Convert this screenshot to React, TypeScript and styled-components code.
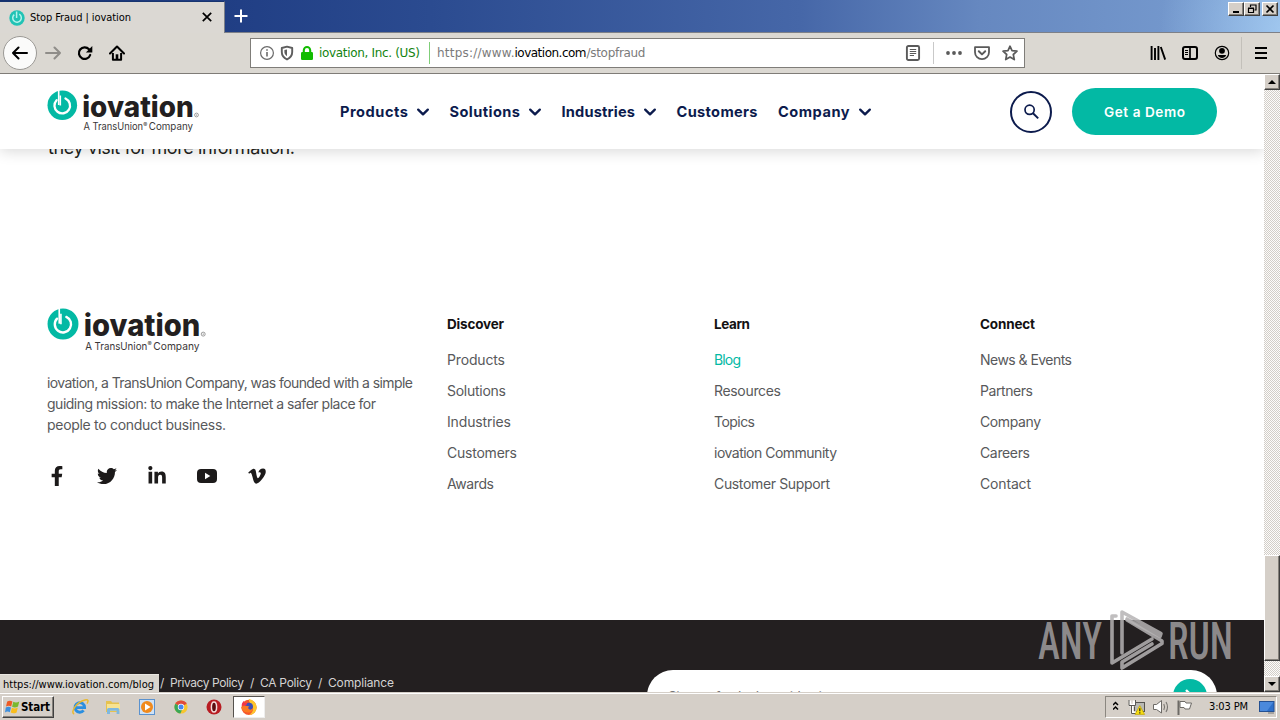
import * as React from "react";
import { useLayoutEffect, useRef, useState } from "react";
import styled, { createGlobalStyle, css } from "styled-components";
import { FaFacebookF, FaTwitter, FaLinkedinIn, FaVimeoV } from "react-icons/fa";

const Teal = "#03b9a4";
const Navy = "#0c1b4d";
const Face = "#d5cfc8";
const SystemFont = `"DejaVu Sans Condensed", "DejaVu Sans", sans-serif`;
const SiteFont = `Inter, "Liberation Sans", sans-serif`;

const GlobalStyle = createGlobalStyle`
    html, body{
        margin: 0;
        padding: 0;
        overflow: hidden;
    }
    *{
        box-sizing: border-box;
    }
    svg{
        display: block;
        flex: none;
    }
`;

const raised = css`
    background: ${Face};
    border: 1px solid;
    border-color: #fff #404040 #404040 #fff;
    box-shadow: inset -1px -1px 0 #85817b;
`;

/* spreads the letters of a label over a given width */
const FitText = styled.span`
    display: inline-block;
    flex: none;
    white-space: pre;
`;

const Fit:(props:{width:number,children:string,className?:string})=>React.ReactElement = ({width,children,className}) =>{
    const ref = useRef<HTMLSpanElement>(null);
    const [spacing,setSpacing] = useState<number>(0);
    useLayoutEffect(()=>{
        const el = ref.current;
        if(!el) return;
        el.style.letterSpacing = "0px";
        const natural = el.getBoundingClientRect().width;
        setSpacing((width - natural) / Math.max(children.length - 1,1));
    },[width,children]);
    return(
        <FitText ref={ref} className={className} style={{letterSpacing:`${spacing}px`,marginRight:`${-spacing}px`}}>{children}</FitText>
    )
}

const Screen = styled.div`
    display: flex;
    flex-direction: column;
    width: 1280px;
    height: 720px;
    overflow: hidden;
    background: #fff;
    font-family: ${SystemFont};
    font-stretch: condensed;
`;

/* ---------- browser chrome ---------- */

const TitleBar = styled.div`
    display: flex;
    align-items: flex-start;
    height: 33px;
    flex: none;
    border-bottom: 1px solid #7d8088;
    background: radial-gradient(circle at 1290px 30px, rgba(175,215,250,.75) 0, rgba(160,200,240,0) 130px), linear-gradient(90deg, #15306f 0, #213f85 240px, #2b4b90 430px, #4667a8 800px, #6688c0 980px, #7ba0d3 1280px);
`;

const Tab = styled.div`
    display: flex;
    align-items: center;
    width: 225px;
    height: 32px;
    margin-top: 1px;
    padding: 0 11px 0 9px;
    border-top: 1px solid #17346f;
    border-right: 1px solid #7d8088;
    background: #dbd8d3;
    font-size: 11px;
    color: #000;
`;

const TabTitle = styled.div`
    flex: 1;
    padding-left: 5px;
    line-height: 16px;
`;

const NewTab = styled.div`
    padding: 9px 0 0 9px;
`;

const WindowButtons = styled.div`
    display: flex;
    margin-left: auto;
    padding: 2px 2px 0 0;
`;

const WindowButton = styled.div<{$gap?:boolean}>`
    ${raised}
    width: 16px;
    height: 14px;
    margin-left: ${props=>props.$gap ? "2px" : "0"};
`;

const ToolBar = styled.div`
    display: flex;
    align-items: center;
    height: 41px;
    flex: none;
    padding: 0 13px 0 3px;
    border-bottom: 1px solid #7f7c77;
    background: #dbd8d2;
`;

const BackButton = styled.div`
    display: grid;
    place-items: center;
    width: 34px;
    height: 34px;
    border: 1px solid #9b9995;
    border-radius: 50%;
    background: #fbfbfa;
`;

const NavIcons = styled.div`
    display: flex;
    gap: 16px;
    padding-left: 8px;
    width: 213px;
`;

const UrlField = styled.div`
    display: flex;
    align-items: center;
    width: 775px;
    height: 30px;
    border: 1px solid #7f7d79;
    background: #fff;
    font-family: "DejaVu Sans", sans-serif;
    font-stretch: normal;
    font-size: 12px;
    padding: 0 6px 0 8px;
`;

const UrlIcons = styled.div<{$gap:number}>`
    display: flex;
    align-items: center;
    gap: ${props=>props.$gap}px;
`;

const SiteOwner = styled(Fit)`
    color: #12830f;
    margin-left: 4px;
`;

const Divider = styled.div<{$color:string,$height:number,$left:number,$right:number}>`
    width: 1px;
    height: ${props=>props.$height}px;
    margin: 0 ${props=>props.$right}px 0 ${props=>props.$left}px;
    background: ${props=>props.$color};
    flex: none;
`;

const UrlText = styled.div`
    display: flex;
    flex: 1;
    color: #7b7b7b;
`;

const Host = styled(Fit)`
    color: #000;
`;

const ToolIcons = styled.div`
    display: flex;
    align-items: center;
    gap: 16px;
    margin-left: auto;
`;

/* ---------- page ---------- */

const Viewport = styled.div`
    display: flex;
    flex: none;
    height: 618px;
    position: relative;
`;

const Page = styled.div`
    display: flex;
    flex-direction: column;
    width: 1264px;
    height: 618px;
    overflow: hidden;
    font-family: ${SiteFont};
    font-stretch: normal;
    color: #231f20;
`;

const Header = styled.header`
    display: flex;
    align-items: center;
    height: 75px;
    flex: none;
    padding: 0 47px 0 47px;
    background: #fff;
    box-shadow: 0 2px 14px rgba(0,0,0,.16);
    z-index: 1;
`;

const Menu = styled.nav`
    display: flex;
    align-items: center;
    gap: 20.5px;
    margin-left: 139px;
    color: ${Navy};
    font-size: 14.6px;
    font-weight: 700;
    line-height: 20px;
`;

const MenuItem = styled.div`
    display: flex;
    align-items: center;
    gap: 9px;
`;

const SearchButton = styled.div`
    display: grid;
    place-items: center;
    width: 42px;
    height: 42px;
    margin-left: auto;
    border: 2px solid ${Navy};
    border-radius: 50%;
`;

const DemoButton = styled.div`
    display: grid;
    place-items: center;
    width: 145px;
    height: 47px;
    margin-left: 20px;
    border-radius: 24px;
    background: ${Teal};
    color: #fff;
    font-size: 13.6px;
    font-weight: 600;
`;

const LastLine = styled.p`
    height: 159px;
    flex: none;
    margin: 0;
    padding-left: 48px;
    font-size: 18px;
    line-height: 24px;
    margin-top: -13px;
    color: #231f20;
`;

const FooterGrid = styled.footer`
    display: grid;
    grid-template-columns: 400px 267px 266px 1fr;
    flex: none;
    height: 325px;
    padding: 13px 0 0 47px;
`;

const About = styled.div`
    font-size: 14px;
    line-height: 21px;
    color: #58595b;
`;

const AboutText = styled.div`
    display: flex;
    flex-direction: column;
    align-items: flex-start;
    padding-top: 19px;
`;

const Social = styled.div`
    display: flex;
    gap: 30px;
    padding-top: 31px;
    color: #1c1a1a;
`;

const SocialIcon = styled.div`
    display: grid;
    place-items: center;
    width: 20px;
    height: 20px;
`;

const Column = styled.div`
    display: flex;
    flex-direction: column;
    align-items: flex-start;
    padding-top: 6px;
    font-size: 14px;
`;

const ColumnTitle = styled.div`
    height: 36px;
    font-weight: 700;
    font-size: 13.5px;
    line-height: 20px;
    color: #131112;
`;

const ColumnLink = styled.div<{$active?:boolean}>`
    height: 31px;
    line-height: 20px;
    color: ${props=>props.$active ? Teal : "#58595b"};
`;

const Bottom = styled.div`
    display: flex;
    justify-content: space-between;
    flex: none;
    height: 72px;
    padding-right: 47px;
    background: #231f20;
    color: #d4d3d3;
    font-size: 12px;
`;

const Legal = styled.div`
    display: flex;
    padding: 54px 0 0 160px;
    line-height: 17px;
`;

const LegalLink = styled.div<{$width:number}>`
    width: ${props=>props.$width}px;
`;

const Slash = styled.span`
    width: 10px;
    flex: none;
`;

const Subscribe = styled.div`
    display: flex;
    justify-content: space-between;
    width: 570px;
    height: 52px;
    margin-top: 50px;
    margin-bottom: -30px;
    padding: 9px 10px 0 21px;
    border-radius: 26px;
    background: #fff;
    color: #777;
    font-size: 14px;
    line-height: 36px;
`;

const SubscribeButton = styled.div`
    width: 34px;
    height: 34px;
    border-radius: 50%;
    background: ${Teal};
    display: grid;
    place-items: center;
`;

const ScrollBar = styled.div`
    display: flex;
    flex-direction: column;
    width: 16px;
    height: 618px;
    background: repeating-conic-gradient(#fdfcfb 0 25%, #d2cec8 0 50%) 0 0 / 2px 2px;
`;

const ScrollButton = styled.div`
    ${raised}
    display: grid;
    place-items: center;
    height: 16px;
    flex: none;
`;

const ScrollThumb = styled.div`
    ${raised}
    height: 106px;
    margin: auto 0 15px;
`;

const StatusBubble = styled.div`
    position: absolute;
    left: 0;
    bottom: 0;
    width: 159px;
    height: 18px;
    padding-left: 3px;
    background: #d9d5ce;
    border-top: 1px solid #e9e6e1;
    font-size: 11px;
    line-height: 19px;
    color: #000;
`;

const Watermark = styled.svg`
    position: absolute;
    left: 1030px;
    top: 526px;
    z-index: 2;
`;

/* ---------- taskbar ---------- */

const TaskBar = styled.div`
    display: flex;
    align-items: flex-start;
    height: 28px;
    flex: none;
    padding: 3px 3px 0 2px;
    background: ${Face};
    border-top: 1px solid ${Face};
    box-shadow: inset 0 1px 0 #fff;
    font-size: 11px;
    color: #000;
`;

const StartButton = styled.div`
    ${raised}
    display: flex;
    align-items: center;
    width: 52px;
    height: 22px;
    padding-left: 2px;
    gap: 1px;
    font-weight: 700;
    font-size: 11.5px;
`;

const QuickLaunch = styled.div`
    display: flex;
    padding-left: 9px;
`;

const Launcher = styled.div<{$active?:boolean}>`
    display: grid;
    place-items: center;
    width: ${props=>props.$active ? "32px" : "33.6px"};
    height: 22px;
    margin-left: ${props=>props.$active ? "2px" : "0"};
    ${props=>props.$active && css`
        background: #fff;
        border: 1px solid;
        border-color: #55524e #eee #eee #55524e;
    `}
`;

const Tray = styled.div`
    display: flex;
    align-items: center;
    width: 172px;
    height: 22px;
    margin-left: auto;
    padding-left: 7px;
    border: 1px solid;
    border-color: #8b8780 #fff #fff #8b8780;
`;

const Clock = styled.div`
    width: 50px;
    margin-left: 14px;
    line-height: 16px;
`;

/* ---------- drawings ---------- */

const Logo:(props:{scale:number})=>React.ReactElement = ({scale}) =>(
    <svg width={154 * scale} height={43 * scale} viewBox="0 0 154 43">
        <circle cx="15.3" cy="15.3" r="14.8" fill={Teal}/>
        <path d="M11.7 0 V15" stroke="#fff" strokeWidth="1.6"/>
        <path d="M13.3 5.5 V15.5" stroke="#fff" strokeWidth="1.6"/>
        <path d="M18.5 8.5 A7.8 7.8 0 1 1 9.6 10.2" fill="none" stroke="#fff" strokeWidth="2.3" strokeLinecap="round"/>
        <text x="35.2" y="26.6" fontFamily="Inter" fontWeight="800" fontSize="28.5" textLength="111.5" lengthAdjust="spacingAndGlyphs" fill="#231f20">iovation</text>
        <circle cx="149.5" cy="25" r="1.9" fill="none" stroke="#777" strokeWidth=".7"/>
        <circle cx="149.5" cy="25" r=".6" fill="#777"/>
        <text x="36.5" y="40.3" fontFamily="Inter" fontSize="10.4" textLength="59.5" lengthAdjust="spacingAndGlyphs" fill="#3a3738">A TransUnion</text>
        <text x="96.2" y="36.5" fontFamily="Inter" fontSize="6" fill="#3a3738">®</text>
        <text x="101.8" y="40.3" fontFamily="Inter" fontSize="10.4" textLength="44.2" lengthAdjust="spacingAndGlyphs" fill="#3a3738">Company</text>
    </svg>
)

const Favicon = () =>(
    <svg width="16" height="16" viewBox="0 0 16 16">
        <circle cx="8" cy="8" r="7.7" fill="#21c3b5"/>
        <path d="M10.3 4.2 A4.3 4.3 0 1 1 5.2 4.6 M7.6 1.5 V8" fill="none" stroke="#b5f3ec" strokeWidth="1.5"/>
    </svg>
)

const Chevron = () =>(
    <svg width="12" height="8" viewBox="0 0 12 8">
        <path d="M1.2 1.6 L6 6.4 L10.8 1.6" fill="none" stroke={Navy} strokeWidth="2.3" strokeLinecap="round" strokeLinejoin="round"/>
    </svg>
)

const Arrow = ({flip,color}:{flip?:boolean,color:string}) =>(
    <svg width="16" height="16" viewBox="0 0 16 16">
        <path d={flip ? "M1 8 H15 M9.5 2.5 L15 8 L9.5 13.5" : "M15 8 H1 M6.5 2.5 L1 8 L6.5 13.5"} fill="none" stroke={color} strokeWidth="2" strokeLinecap="round" strokeLinejoin="round"/>
    </svg>
)

const Reload = () =>(
    <svg width="16" height="16" viewBox="0 0 16 16">
        <path d="M13.2 10 A5.8 5.8 0 1 1 12 4.2" fill="none" stroke="#000" strokeWidth="2.2" strokeLinecap="round"/>
        <path d="M15.3 1 V7.4 H8.9 Z" fill="#000"/>
    </svg>
)

const Home = () =>(
    <svg width="16" height="16" viewBox="0 0 16 16">
        <path d="M1 8.4 L8 1.5 L15 8.4" fill="none" stroke="#000" strokeWidth="2.1" strokeLinecap="round" strokeLinejoin="round"/>
        <path d="M3.9 8 V14.7 H12.1 V8" fill="none" stroke="#000" strokeWidth="2" strokeLinejoin="round"/>
        <path d="M6.7 14 V9.3 H9.3 V14 Z" fill="#000"/>
    </svg>
)

const Info = () =>(
    <svg width="16" height="16" viewBox="0 0 16 16">
        <circle cx="8" cy="8" r="6.4" fill="none" stroke="#6b6b6b" strokeWidth="1.2"/>
        <path d="M8 7 V11.6 M8 4.2 V5.8" stroke="#6b6b6b" strokeWidth="1.6"/>
    </svg>
)

const Shield = () =>(
    <svg width="16" height="16" viewBox="0 0 16 16">
        <path d="M8 1.6 L13.2 3 V7 C13.2 10.5 11 13 8 14.5 C5 13 2.8 10.5 2.8 7 V3 Z" fill="none" stroke="#5e5e5e" strokeWidth="1.9" strokeLinejoin="round"/>
        <path d="M8 4.4 V11.2 C6.3 10 5.4 8.7 5.4 7 V5 Z" fill="#5e5e5e"/>
    </svg>
)

const Lock = () =>(
    <svg width="16" height="16" viewBox="0 0 16 16">
        <path d="M4.8 8 V5.2 A3.2 3.2 0 0 1 11.2 5.2 V8" fill="none" stroke="#12bc00" strokeWidth="2.1"/>
        <rect x="2" y="7" width="12" height="8" rx="1.2" fill="#12bc00"/>
    </svg>
)

const Reader = () =>(
    <svg width="16" height="16" viewBox="0 0 16 16" fill="none" stroke="#5a5a5a">
        <rect x="1.9" y="1" width="12.2" height="14" rx="1.5" strokeWidth="1.9"/>
        <path d="M4.8 4.5 H11.2 M4.8 6.5 H11.2 M4.8 8.5 H11.2 M4.8 10.5 H9" strokeWidth="1"/>
    </svg>
)

const Dots = () =>(
    <svg width="16" height="16" viewBox="0 0 16 16" fill="#5a5a5a">
        <circle cx="2" cy="8" r="1.9"/>
        <circle cx="8" cy="8" r="1.9"/>
        <circle cx="14" cy="8" r="1.9"/>
    </svg>
)

const Pocket = () =>(
    <svg width="16" height="16" viewBox="0 0 16 16" fill="none" stroke="#5a5a5a" strokeLinecap="round" strokeLinejoin="round">
        <path d="M1 2.2 H15 V7.2 A7 7 0 0 1 1 7.2 Z" strokeWidth="1.8"/>
        <path d="M4.8 6.3 L8 9.4 L11.2 6.3" strokeWidth="2"/>
    </svg>
)

const Star = () =>(
    <svg width="16" height="16" viewBox="0 0 16 16">
        <path d="M8 1.2 L10 5.7 L15 6.2 L11.3 9.5 L12.3 14.6 L8 12 L3.7 14.6 L4.7 9.5 L1 6.2 L6 5.7 Z" fill="none" stroke="#5a5a5a" strokeWidth="1.7" strokeLinejoin="round"/>
    </svg>
)

const Library = () =>(
    <svg width="16" height="16" viewBox="0 0 16 16">
        <path d="M1.6 1 V15 M5 3 V15 M8.4 1 V15 M10.8 2 L15.2 14.6" fill="none" stroke="#000" strokeWidth="1.9"/>
    </svg>
)

const Sidebar = () =>(
    <svg width="16" height="16" viewBox="0 0 16 16" fill="none" stroke="#000">
        <rect x="1" y="2" width="14" height="12" rx="2" strokeWidth="2"/>
        <path d="M8 2 V14" strokeWidth="1.7"/>
        <path d="M3 5.5 H6 M3 7.5 H6 M3 9.5 H6" strokeWidth="1"/>
    </svg>
)

const Account = () =>(
    <svg width="16" height="16" viewBox="0 0 16 16">
        <circle cx="8" cy="8" r="6.7" fill="none" stroke="#000" strokeWidth="1.2"/>
        <circle cx="8" cy="5.8" r="2.9"/>
        <path d="M3.8 10 H12.2 C11.3 12.2 9.8 13 8 13 C6.2 13 4.7 12.2 3.8 10 Z"/>
    </svg>
)

const Burger = () =>(
    <svg width="12" height="16" viewBox="0 0 12 16">
        <path d="M.5 3 H11.5 M.5 8 H11.5 M.5 13 H11.5" stroke="#000" strokeWidth="2" strokeLinecap="round"/>
    </svg>
)

const Glass = () =>(
    <svg width="18" height="18" viewBox="0 0 18 18">
        <circle cx="7.6" cy="6.8" r="4.6" fill="none" stroke={Navy} strokeWidth="1.7"/>
        <path d="M11 10.2 L16.2 15.4" stroke={Navy} strokeWidth="2"/>
    </svg>
)

const YouTube = () =>(
    <svg width="20" height="16" viewBox="0 0 20 16">
        <rect x="0" y="1" width="20" height="14" rx="4" fill="#1c1a1a"/>
        <path d="M8 4.8 V11.2 L13.3 8 Z" fill="#fff"/>
    </svg>
)

const WindowsFlag = () =>(
    <svg width="15" height="16" viewBox="0 0 15 16">
        <path d="M2.2 2.6 Q4.8 .8 7.4 2.4 L6.2 7.4 Q3.6 6 1 7.6 Z" fill="#ee5a24"/>
        <path d="M8.3 2.8 Q11 4.4 14.3 2.6 L13 7.6 Q10 9.4 7.1 7.8 Z" fill="#7ab82e"/>
        <path d="M.8 8.5 Q3.4 7 6 8.4 L4.8 13.2 Q2.4 11.8 0 13.4 Z" fill="#3e8fdd"/>
        <path d="M6.9 8.8 Q9.8 10.4 12.8 8.6 L11.6 13.4 Q8.6 15.2 5.7 13.6 Z" fill="#f9bd1c"/>
    </svg>
)

const Explorer = () =>(
    <svg width="18" height="18" viewBox="0 0 18 18">
        <path d="M4.7 9.6 H13.6 A4.8 4.8 0 1 0 12.6 12.4" fill="none" stroke="#2b8fe0" strokeWidth="2.9"/>
        <path d="M3.2 16 C-1 15 5 4 14 2 C17.5 1.2 17.6 3 16 5.6" fill="none" stroke="#e9b92e" strokeWidth="1.5"/>
    </svg>
)

const Folder = () =>(
    <svg width="18" height="18" viewBox="0 0 18 18">
        <path d="M2 3 H7 L8.3 4.6 H15 V14 H2 Z" fill="#e6c250"/>
        <rect x="3" y="6" width="13" height="7" fill="#f8e391"/>
        <path d="M3 16 V11.5 Q3 10 4.5 10 H13.8 Q15.4 10 15.4 11.5 V16 H12.6 V12.8 H6 V16 Z" fill="#7fb8df"/>
    </svg>
)

const Player = () =>(
    <svg width="18" height="18" viewBox="0 0 18 18">
        <rect x="1.5" y="1.5" width="15" height="15" fill="#cfe2f6" stroke="#5a92cf"/>
        <circle cx="9" cy="9" r="6" fill="#f08a1d"/>
        <path d="M7 5.5 V12.5 L12.6 9 Z" fill="#fff"/>
    </svg>
)

const Chrome = () =>(
    <svg width="16" height="16" viewBox="0 0 16 16">
        <circle cx="8" cy="8" r="6.6" fill="#f7c62f"/>
        <path d="M8 8 L2.3 4.7 A6.6 6.6 0 0 1 13.7 4.7 Z" fill="#df4a3c"/>
        <path d="M8 8 L2.3 4.7 A6.6 6.6 0 0 0 7.4 14.6 L9.6 9.5 Z" fill="#3aa757"/>
        <circle cx="8" cy="8" r="3.2" fill="#fff"/>
        <circle cx="8" cy="8" r="2.5" fill="#4687f0"/>
    </svg>
)

const Opera = () =>(
    <svg width="16" height="16" viewBox="0 0 16 16">
        <circle cx="8" cy="8" r="7.5" fill="#b81c22"/>
        <ellipse cx="8" cy="8" rx="2.6" ry="5" fill="#5c0c0e" stroke="#f3dcdc" strokeWidth="1.5"/>
    </svg>
)

const Firefox = () =>(
    <svg width="18" height="18" viewBox="0 0 18 18">
        <circle cx="9" cy="9.4" r="7.6" fill="#f6562b"/>
        <path d="M9 1 C14 2 17 6 16.6 10 A7.7 7.7 0 0 1 9 17 C13 14 14 11 12.4 8 C11.4 5.5 8.4 4.5 9 1 Z" fill="#fdc52c"/>
        <circle cx="9" cy="8.8" r="4" fill="#3d4fb8"/>
        <path d="M1.4 9.4 C3 7.5 6 7.2 9.6 8.6 C8 9 7.6 10.6 9.6 11.6 C12 12 12.6 10.6 13 9.6 C13.4 13 11 14.6 8.6 14.6 C5 14.6 2 12.6 1.4 9.4 Z" fill="#fb7a22"/>
        <path d="M1.6 7.4 C2 5 3 3.6 4 3 L4.4 5 L7.4 5 L6 7.4 Z" fill="#f2344b"/>
    </svg>
)

const TrayIcons = () =>(
    <svg width="82" height="18" viewBox="0 0 82 18">
        <path d="M0 7 L2.5 4.5 L5 7 M0 11.5 L2.5 9 L5 11.5" fill="none" stroke="#000" strokeWidth="1.5"/>
        <rect x="21.5" y="4.5" width="10" height="9" fill="#b9b9b4" stroke="#55534f"/>
        <path d="M17 2.5 V7 H21 V2.5 M19 7 V14.5 H23" fill="none" stroke="#fff" strokeWidth="2.6"/>
        <path d="M16 2 V7.5 H22.5 V2 M18.5 7.5 V15.5 H23" fill="none" stroke="#5a5855" strokeWidth="1"/>
        <path d="M26.8 7.6 L31.6 16.4 H22 Z" fill="#f7dd13" stroke="#bfa200" strokeWidth=".7"/>
        <path d="M26.8 10.3 V13.3 M26.8 14.2 V15.4" stroke="#222" strokeWidth="1.2"/>
        <path d="M40.5 6.5 H43.5 L48.5 2.5 V15 L43.5 11.5 H40.5 Z" fill="#fff" stroke="#6d6a66"/>
        <path d="M50.8 6 Q52.4 9 50.8 12 M53 4 Q56 9 53 14" fill="none" stroke="#77746f" strokeWidth="1.1"/>
        <path d="M65.5 2.5 V17" stroke="#6d6a66" strokeWidth="2"/>
        <path d="M67 3.5 H72 L73 5 H78.5 L76.5 11 H72 L71 9.5 H67 Z" fill="#fff" stroke="#6d6a66"/>
    </svg>
)

const Desktop = () =>(
    <svg width="16" height="16" viewBox="0 0 16 16">
        <rect x=".5" y="2.5" width="14.5" height="10" fill="#2d6fca" stroke="#245092"/>
        <path d="M1 3 H14.5 L8 12 H1 Z" fill="#5e9be8" opacity=".6"/>
        <path d="M9 14 H15" stroke="#777" strokeWidth="1"/>
    </svg>
)

/* ---------- content ---------- */

const menu:{name:string,width:number,drop:boolean}[] = [
    {name:"Products",width:68,drop:true},
    {name:"Solutions",width:70.5,drop:true},
    {name:"Industries",width:73.5,drop:true},
    {name:"Customers",width:81,drop:false},
    {name:"Company",width:71.5,drop:true},
];

const columns:{title:string,width:number,links:[string,number][]}[] = [
    {title:"Discover",width:57,links:[["Products",58],["Solutions",59],["Industries",64],["Customers",70],["Awards",47]]},
    {title:"Learn",width:36,links:[["Blog",27],["Resources",67],["Topics",41],["iovation Community",123],["Customer Support",116]]},
    {title:"Connect",width:55,links:[["News & Events",92],["Partners",53],["Company",61],["Careers",50],["Contact",51]]},
];

const App:()=>React.ReactElement = () =>{
    return(
        <Screen>
            <GlobalStyle/>
            <TitleBar>
                <Tab>
                    <Favicon/>
                    <TabTitle><Fit width={101}>Stop Fraud | iovation</Fit></TabTitle>
                    <svg width="12" height="12" viewBox="0 0 12 12">
                        <path d="M1.8 .8 L10.2 9.2 M10.2 .8 L1.8 9.2" stroke="#000" strokeWidth="1.7"/>
                    </svg>
                </Tab>
                <NewTab>
                    <svg width="14" height="14" viewBox="0 0 14 14">
                        <path d="M7 .5 V13.5 M.5 7 H13.5" stroke="#fff" strokeWidth="2"/>
                    </svg>
                </NewTab>
                <WindowButtons>
                    <WindowButton>
                        <svg width="13" height="12" viewBox="0 0 13 12"><path d="M4 9 H10" stroke="#000" strokeWidth="2"/></svg>
                    </WindowButton>
                    <WindowButton>
                        <svg width="13" height="12" viewBox="0 0 13 12" fill="none" stroke="#000">
                            <path d="M5.5 4 V2 H11 V7 H9.5 M5 2 H11.5" strokeWidth="1.2"/>
                            <path d="M3.5 5.5 H8.5 V9.5 H3.5 Z M3 5 H9" strokeWidth="1.2"/>
                        </svg>
                    </WindowButton>
                    <WindowButton $gap>
                        <svg width="13" height="12" viewBox="0 0 13 12"><path d="M3.5 2.5 L10.5 9.5 M10.5 2.5 L3.5 9.5" stroke="#000" strokeWidth="1.7"/></svg>
                    </WindowButton>
                </WindowButtons>
            </TitleBar>
            <ToolBar>
                <BackButton><Arrow color="#000"/></BackButton>
                <NavIcons>
                    <Arrow flip color="#8f8d89"/>
                    <Reload/>
                    <Home/>
                </NavIcons>
                <UrlField>
                    <UrlIcons $gap={4}>
                        <Info/>
                        <Shield/>
                        <Lock/>
                    </UrlIcons>
                    <SiteOwner width={101}>iovation, Inc. (US)</SiteOwner>
                    <Divider $color="#7fce78" $height={22} $left={9} $right={7}/>
                    <UrlText>
                        <Fit width={77.5}>https://www.</Fit>
                        <Host width={72}>iovation.com</Host>
                        <Fit width={59}>/stopfraud</Fit>
                    </UrlText>
                    <Reader/>
                    <Divider $color="#c9c9c9" $height={22} $left={12} $right={12}/>
                    <UrlIcons $gap={12}>
                        <Dots/>
                        <Pocket/>
                        <Star/>
                    </UrlIcons>
                </UrlField>
                <ToolIcons>
                    <Library/>
                    <Sidebar/>
                    <Account/>
                </ToolIcons>
                <Divider $color="#c3c0ba" $height={32} $left={11} $right={13}/>
                <Burger/>
            </ToolBar>
            <Viewport>
                <Page>
                    <Header>
                        <Logo scale={1}/>
                        <Menu>
                            {menu.map(item=>(
                                <MenuItem key={item.name}>
                                    <Fit width={item.width}>{item.name}</Fit>
                                    {item.drop && <Chevron/>}
                                </MenuItem>
                            ))}
                        </Menu>
                        <SearchButton><Glass/></SearchButton>
                        <DemoButton><Fit width={81}>Get a Demo</Fit></DemoButton>
                    </Header>
                    <LastLine><Fit width={247}>they visit for more information.</Fit></LastLine>
                    <FooterGrid>
                        <About>
                            <Logo scale={1.045}/>
                            <AboutText>
                                <Fit width={366}>iovation, a TransUnion Company, was founded with a simple</Fit>
                                <Fit width={329}>guiding mission: to make the Internet a safer place for</Fit>
                                <Fit width={179}>people to conduct business.</Fit>
                            </AboutText>
                            <Social>
                                <SocialIcon><FaFacebookF size={20}/></SocialIcon>
                                <SocialIcon><FaTwitter size={20}/></SocialIcon>
                                <SocialIcon><FaLinkedinIn size={20}/></SocialIcon>
                                <SocialIcon><YouTube/></SocialIcon>
                                <SocialIcon><FaVimeoV size={20}/></SocialIcon>
                            </Social>
                        </About>
                        {columns.map(column=>(
                            <Column key={column.title}>
                                <ColumnTitle><Fit width={column.width}>{column.title}</Fit></ColumnTitle>
                                {column.links.map(([name,width])=>(
                                    <ColumnLink key={name} $active={name === "Blog"}><Fit width={width}>{name}</Fit></ColumnLink>
                                ))}
                            </Column>
                        ))}
                    </FooterGrid>
                    <Bottom>
                        <Legal>
                            <Slash>/</Slash>
                            <LegalLink $width={80}><Fit width={74}>Privacy Policy</Fit></LegalLink>
                            <Slash>/</Slash>
                            <LegalLink $width={58}><Fit width={52}>CA Policy</Fit></LegalLink>
                            <Slash>/</Slash>
                            <LegalLink $width={70}><Fit width={66}>Compliance</Fit></LegalLink>
                        </Legal>
                        <Subscribe>
                            <Fit width={165}>Sign up for the latest identity</Fit>
                            <SubscribeButton>
                                <svg width="12" height="14" viewBox="0 0 12 14"><path d="M2 1 L8 7 L2 13" fill="none" stroke="#fff" strokeWidth="2.4"/></svg>
                            </SubscribeButton>
                        </Subscribe>
                    </Bottom>
                </Page>
                <ScrollBar>
                    <ScrollButton><svg width="8" height="4" viewBox="0 0 8 4"><path d="M4 0 L8 4 H0 Z"/></svg></ScrollButton>
                    <ScrollThumb/>
                    <ScrollButton><svg width="8" height="4" viewBox="0 0 8 4"><path d="M4 4 L8 0 H0 Z"/></svg></ScrollButton>
                </ScrollBar>
                <StatusBubble><Fit width={151}>https://www.iovation.com/blog</Fit></StatusBubble>
                <Watermark width="210" height="90" viewBox="0 0 210 90">
                    <g fill="#a09d9e" fillOpacity=".85" fontFamily="Roboto" fontSize="52" fontWeight="500">
                        <text x="8" y="59" textLength="64" lengthAdjust="spacingAndGlyphs">ANY</text>
                        <text x="138" y="59" textLength="65" lengthAdjust="spacingAndGlyphs">RUN</text>
                    </g>
                    <g fill="none" stroke="#b5b3b4" strokeOpacity=".85" strokeWidth="3.6" strokeLinejoin="round" strokeLinecap="round">
                        <path d="M92 53 V12 L131 33.5 L130 36.5 L97 19"/>
                        <path d="M86 16 H82 V63 L122 39"/>
                        <path d="M97 20 L132 41 V43.5 L92 68 V62 L122 44"/>
                    </g>
                </Watermark>
            </Viewport>
            <TaskBar>
                <StartButton><WindowsFlag/><Fit width={29}>Start</Fit></StartButton>
                <QuickLaunch>
                    <Launcher><Explorer/></Launcher>
                    <Launcher><Folder/></Launcher>
                    <Launcher><Player/></Launcher>
                    <Launcher><Chrome/></Launcher>
                    <Launcher><Opera/></Launcher>
                    <Launcher $active><Firefox/></Launcher>
                </QuickLaunch>
                <Tray>
                    <TrayIcons/>
                    <Clock><Fit width={39}>3:03 PM</Fit></Clock>
                    <Desktop/>
                </Tray>
            </TaskBar>
        </Screen>
    )
}

export default App;
